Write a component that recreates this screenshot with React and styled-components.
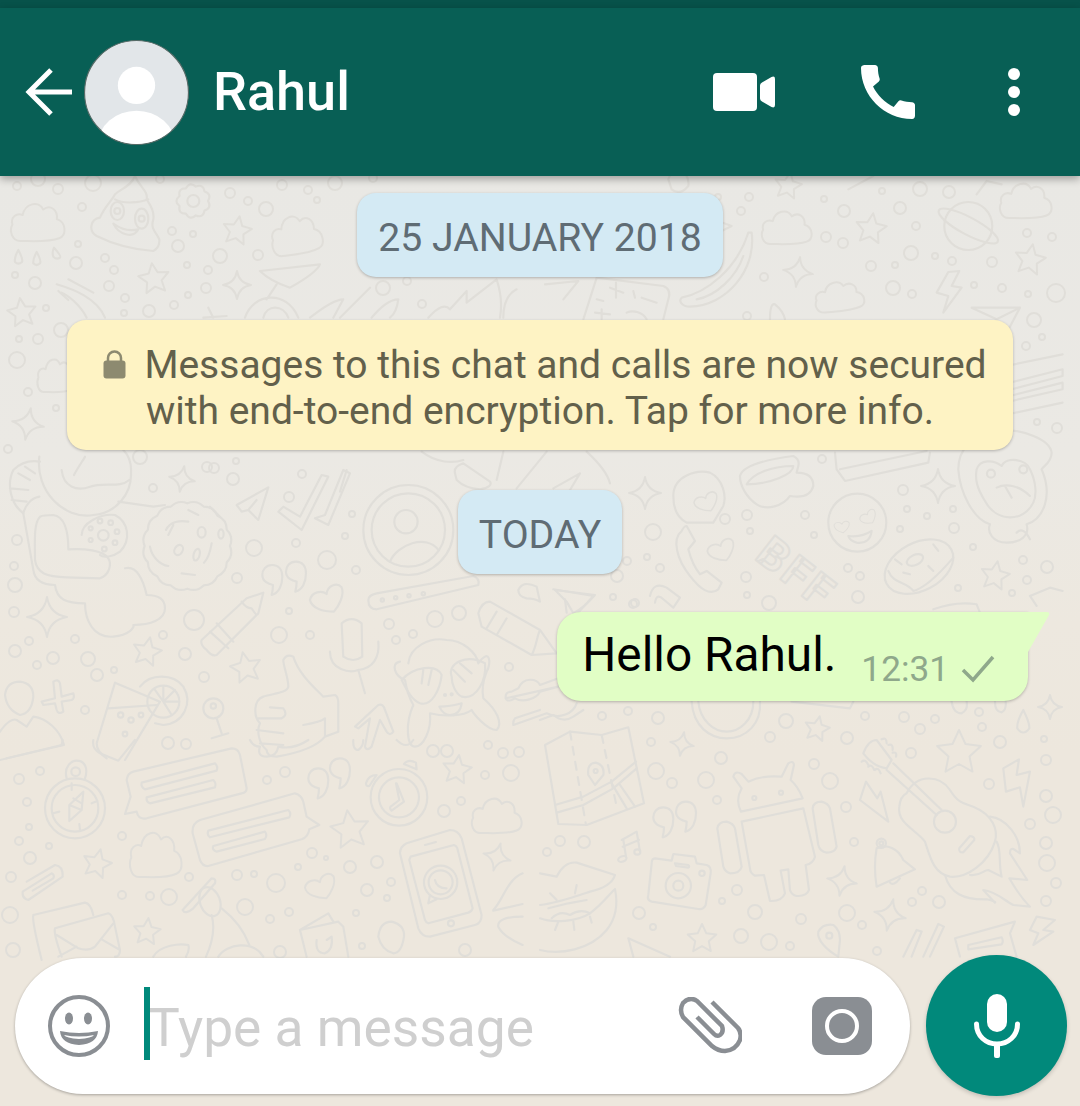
import React from 'react';
import styled, { createGlobalStyle } from 'styled-components';

const GlobalStyle = createGlobalStyle`
html, body {
  margin: 0;
  padding: 0;
  background: #ece7dd;
}
body {
  font-family: Roboto, "Liberation Sans", sans-serif;
}
`;

const Page = styled.div`
width: 1080px;
height: 1106px;
display: flex;
flex-direction: column;
overflow: hidden;
`;

const StatusBar = styled.div`
height: 8px;
flex: none;
background: #07524a;
position: relative;
z-index: 2;
`;

const Header = styled.header`
height: 168px;
flex: none;
display: flex;
align-items: center;
padding: 0 60px 0 25px;
background: #085f55;
box-shadow: 0 3px 8px rgba(0, 0, 0, 0.32);
position: relative;
z-index: 2;
`;

const BackArrow = styled.svg`
width: 48px;
height: 48px;
flex: none;
`;

const Avatar = styled.svg`
width: 105px;
height: 105px;
margin-left: 11px;
flex: none;
`;

const Title = styled.h1`
margin: 0 0 0 24px;
font-size: 54px;
font-weight: 500;
color: #fff;
line-height: 1;
`;

const HeaderActions = styled.div`
margin-left: auto;
display: flex;
align-items: center;
`;

const VideoIcon = styled.svg`
width: 62px;
height: 38px;
`;

const PhoneIcon = styled.svg`
width: 72px;
height: 72px;
margin-left: 77px;
`;

const MenuDots = styled.div`
width: 12px;
margin-left: 84px;
display: flex;
flex-direction: column;
gap: 6px;
`;

const Dot = styled.span`
width: 12px;
height: 12px;
border-radius: 50%;
background: #fff;
`;

const Wall = styled.main`
flex: 1;
position: relative;
isolation: isolate;
display: flex;
flex-direction: column;
align-items: center;
padding-top: 17px;
background: linear-gradient(#e9e8e4 0%, #ebe9e4 30%, #ede8df 48%, #ede7dd 62%, #ede7dd 100%);
`;

const DoodleLayer = styled.svg`
position: absolute;
top: 0;
left: 0;
width: 1080px;
height: 930px;
z-index: -1;
fill: none;
stroke: #e0ded9;
stroke-width: 2;
stroke-linejoin: round;
stroke-linecap: round;
`;

const ThirdScale = styled.g`
stroke-width: 6.5;
`;

const DoodleWord = styled.text`
font-family: Roboto, sans-serif;
font-weight: 700;
font-size: 44px;
letter-spacing: 3px;
`;

const DayPill = styled.div`
height: 84px;
box-sizing: border-box;
padding: 5px 21px 0;
display: flex;
align-items: center;
background: #d4eaf4;
border-radius: 19px;
box-shadow: 0 1px 3px rgba(0, 0, 0, 0.25);
color: #5f6c74;
font-size: 39.2px;
margin-bottom: ${(p) => p.$gap}px;
`;

const Notice = styled.div`
width: 946px;
height: 130px;
box-sizing: border-box;
padding-top: 22px;
background: #fef3c4;
border-radius: 19px;
box-shadow: 0 1px 3px rgba(0, 0, 0, 0.25);
color: #62604b;
font-size: 39px;
line-height: 46px;
text-align: center;
margin-bottom: 40px;
`;

const LockIcon = styled.svg`
width: 23px;
height: 29px;
margin: 0 18px 0 10px;
vertical-align: -1px;
`;

const Outgoing = styled.div`
align-self: flex-end;
margin-right: 52px;
height: 89px;
box-sizing: border-box;
padding: 0 33px 0 25px;
display: flex;
align-items: center;
position: relative;
background: #e1fec5;
border-radius: 24px 0 24px 24px;
box-shadow: 0 1px 3px rgba(0, 0, 0, 0.25);
`;

const BubbleTail = styled.svg`
position: absolute;
top: 0;
left: 100%;
width: 22px;
height: 40px;
`;

const MessageText = styled.span`
font-size: 47.8px;
color: #000;
margin-top: -3px;
`;

const MessageMeta = styled.span`
margin-left: 25px;
margin-top: 24px;
display: flex;
align-items: center;
font-size: 35.2px;
color: #8fa88b;
`;

const TickIcon = styled.svg`
width: 34px;
height: 28px;
margin-left: 12px;
`;

const Composer = styled.div`
margin-top: auto;
align-self: stretch;
padding: 0 13px 10px 15px;
display: flex;
align-items: center;
gap: 16px;
`;

const InputBar = styled.div`
flex: 1;
height: 136px;
box-sizing: border-box;
padding: 0 38px 0 32px;
display: flex;
align-items: center;
background: #fff;
border-radius: 68px;
box-shadow: 0 1px 3px rgba(0, 0, 0, 0.3);
`;

const EmojiIcon = styled.svg`
width: 64px;
height: 64px;
flex: none;
`;

const Placeholder = styled.div`
position: relative;
margin-left: 37px;
padding-top: 6px;
font-size: 53.3px;
color: #cfcfcf;
line-height: 1;
`;

const Caret = styled.span`
position: absolute;
left: -4px;
top: -9px;
width: 6px;
height: 73px;
background: #00897b;
`;

const ClipIcon = styled.svg`
width: 64px;
height: 58px;
margin-left: auto;
flex: none;
`;

const CameraIcon = styled.svg`
width: 60px;
height: 58px;
margin-left: 70px;
flex: none;
`;

const MicButton = styled.div`
width: 141px;
height: 141px;
flex: none;
display: flex;
align-items: center;
justify-content: center;
background: #01897b;
border-radius: 50%;
box-shadow: 0 2px 4px rgba(0, 0, 0, 0.18);
`;

const MicIcon = styled.svg`
width: 46px;
height: 64px;
`;

// wallpaper helpers, all in page coordinates
const star = (cx, cy, r, rot = 0) => {
    const pts = [];
    for (let i = 0; i < 10; i++) {
        const a = ((rot - 90 + i * 36) * Math.PI) / 180;
        const rad = i % 2 ? r * 0.48 : r;
        pts.push(`${(cx + rad * Math.cos(a)).toFixed(1)} ${(cy + rad * Math.sin(a)).toFixed(1)}`);
    }
    return `M${pts.join('L')}Z`;
};

const sparkle = (cx, cy, r, rot = 0) => {
    let d = '';
    for (let i = 0; i < 4; i++) {
        const a = ((rot + i * 90) * Math.PI) / 180;
        const b = ((rot + i * 90 + 45) * Math.PI) / 180;
        const c = ((rot + i * 90 + 90) * Math.PI) / 180;
        const p = (ang, k) => `${(cx + r * k * Math.cos(ang)).toFixed(1)} ${(cy + r * k * Math.sin(ang)).toFixed(1)}`;
        d += `${i ? '' : `M${p(a, 1)}`}Q${p(b, 0.2)} ${p(c, 1)}`;
    }
    return `${d}Z`;
};

const scallop = (cx, cy, r, n, amp) => {
    let d = '';
    for (let i = 0; i < n; i++) {
        const a0 = (i * 2 * Math.PI) / n;
        const a1 = ((i + 0.5) * 2 * Math.PI) / n;
        const a2 = ((i + 1) * 2 * Math.PI) / n;
        d += `${i ? '' : `M${(cx + r * Math.cos(a0)).toFixed(1)} ${(cy + r * Math.sin(a0)).toFixed(1)}`}Q${(cx + (r + amp) * Math.cos(a1)).toFixed(1)} ${(cy + (r + amp) * Math.sin(a1)).toFixed(1)} ${(cx + r * Math.cos(a2)).toFixed(1)} ${(cy + r * Math.sin(a2)).toFixed(1)}`;
    }
    return `${d}Z`;
};

const CLOUD = 'M20 60C5 60 0 45 6 36C2 25 14 18 24 22C28 5 52 0 60 14C72 6 86 14 84 28C100 32 102 52 88 56C70 62 40 60 20 60Z';
const COMMA = 'M30 0C10 0 0 15 0 30C0 50 20 58 32 60C32 72 30 82 28 90C50 85 60 60 60 35C60 15 50 0 30 0Z';
const HEART = 'M0 50C5 25 35 20 50 32C52 8 80 -5 95 12C105 35 85 70 72 85C40 85 5 75 0 50Z';

const clouds = [
    [9, 200, 57, 41, 0], [269, 212, 54, 42, -8], [760, 208, 53, 36, 0], [813, 279, 52, 32, -6],
    [998, 180, 55, 38, 0], [36, 356, 40, 36, 0], [128, 828, 55, 49, 0], [470, 795, 53, 38, 0],
];

const dots = [
    [17,186,4],[38,179,7],[58,189,5],[93,183,8],[82,207,4],[160,179,4],[230,193,5],[248,201,4],[266,209,7],[282,185,5],[308,190,4],[317,200,3],[335,183,7],[373,178,4],
    [172,231,4],[193,234,3],[178,246,6],[220,256,7],[258,255,5],[78,244,3],[105,258,4],[76,263,6],[114,270,4],[187,265,3],[208,270,4],[15,275,3],[35,283,6],[109,286,5],[206,288,5],[188,295,3],[125,298,4],[174,305,4],[149,311,6],[124,313,3],[46,308,3],[61,330,7],[38,339,5],[19,339,3],[17,360,8],[28,392,4],[56,408,3],[8,449,4],[383,288,7],[407,281,4],[422,304,4],[140,457,7],[207,467,5],[236,461,3],
    [749,197,4],[741,211,4],[718,197,3],[824,199,3],[844,211,6],[826,237,5],[843,243,5],[882,191,3],[900,208,6],[920,189,7],[949,192,6],[916,226,4],[911,253,7],[935,256,3],[952,261,4],[895,265,3],[871,266,5],[893,288,7],[912,294,4],[992,262,5],[1027,233,4],[1052,237,4],[974,285,3],[1002,288,4],[1028,294,3],[1056,293,9],[764,277,4],[747,316,4],[1034,320,7],[1042,337,3],[1026,346,4],[1037,422,3],[1057,428,5],[822,459,4],[903,490,5],[907,509,3],[927,516,3],[953,509,3],[954,528,5],[900,529,3],[805,515,4],[747,515,5],[725,519,5],[750,531,3],[653,532,8],[814,535,3],[627,561,4],[647,557,3],[660,568,4],[617,576,6],[613,597,3],[633,604,4],[746,577,5],[747,595,3],[769,603,7],[858,597,6],[860,576,4],[848,568,4],[973,547,3],[1023,560,4],[1047,567,6],[1027,580,4],[1012,593,3],[958,588,3],
    [17,540,5],[14,566,4],[15,585,7],[14,612,5],[29,641,4],[15,651,6],[53,658,6],[37,665,4],[75,639,4],[88,659,7],[97,675,6],[114,670,3],[85,710,4],[153,488,4],[214,468,5],[233,479,6],[302,474,4],[289,497,5],[352,514,3],[345,536,3],[296,543,4],[254,548,8],[327,560,9],[356,570,4],[237,578,5],[289,611,3],[194,620,10],[279,635,8],[310,635,4],[389,624,5],[396,640,4],[163,635,4],[185,654,6],[204,677,5],[168,743,6],[186,744,5],
    [19,779,5],[40,771,4],[27,802,4],[29,827,3],[19,841,4],[49,846,3],[30,858,6],[11,877,5],[10,915,8],[13,950,7],[122,836,4],[122,895,4],[150,896,4],[169,897,8],[189,877,4],[237,875,5],[254,874,3],[276,883,9],[245,907,8],[270,919,4],[289,912,4],[280,952,6],[267,780,4],[285,772,5],[433,751,6],[488,745,4],[503,753,5],[485,775,4],[511,773,8],[444,811,6],[461,801,4],[312,853,5],[326,858,2],[298,867,3],[350,867,6],[377,862,6],[367,890,6],[391,882,4],[387,898,3],[356,913,3],[362,946,3],[465,950,6],
    [602,716,4],[628,711,4],[658,718,6],[651,742,4],[656,771,8],[672,783,5],[706,780,8],[721,758,6],[717,800,4],[770,737,5],[786,721,7],[847,738,6],[865,716,4],[904,717,5],[920,729,5],[935,719,4],[979,712,4],[982,727,4],[911,753,5],[814,764,5],[830,781,8],[846,807,5],[854,842,4],[1000,742,6],[1044,739,3],[1046,760,5],[989,784,5],[1046,796,6],[1053,815,8],[1030,824,5],[1046,843,6],[1047,863,8],[1056,883,5],[1046,901,5],[922,891,4],[912,902,4],[939,902,6],[847,913,8],[862,925,4],[877,951,4],[560,841,5],[584,842,6],[547,852,4],[737,890,5],[722,901,3],[755,912,7],[639,913,6],[653,927,3],[801,919,5],[741,936,7],[769,942,8],[790,946,4],
    [435,619,8],[459,613,7],[413,634,4],[509,667,4],[447,751,6],[519,752,5],[635,603,4],
];

const stars = [
    [237,231,15,10],[154,279,16,-8],[22,313,15,-8],[871,229,16,8],[1030,260,16,10],[995,576,15,10],[788,186,14,10],
    [147,652,15,12],[246,668,16,-12],[457,770,15,8],[350,830,20,-8],[97,864,15,14],[147,932,14,6],[817,729,13,12],[959,753,23,0],[702,939,15,0],
];

const sparkles = [
    [237,285,14,0],[28,424,16,10],[798,272,15,8],[645,493,16,0],[938,486,17,0],[182,479,13,10],[47,617,20,0],[497,857,14,15],[682,744,12,10],[842,881,15,10],[890,915,16,12],[1050,707,12,0],
];

const Doodles = () => (
    <DoodleLayer viewBox="0 176 1080 930" aria-hidden="true">
        {dots.map(([x, y, r], i) => <circle key={`d${i}`} cx={x} cy={y} r={r} />)}
        {stars.map(([x, y, r, a], i) => <path key={`s${i}`} d={star(x, y, r, a)} />)}
        {sparkles.map(([x, y, r, a], i) => <path key={`k${i}`} d={sparkle(x, y, r, a)} />)}
        {clouds.map(([x, y, w, h, a], i) => (
            <path key={`c${i}`} d={CLOUD} vectorEffect="non-scaling-stroke"
                transform={`rotate(${a} ${x + w / 2} ${y + h / 2}) translate(${x} ${y}) scale(${w / 100} ${h / 60})`} />
        ))}
        <DoodleWord x="797" y="588" textAnchor="middle" transform="rotate(38 797 572)">BFF</DoodleWord>

        {/* top left */}
        <g transform="translate(0 176) scale(0.3333)">
            <ThirdScale>
                <path d="M300 125C270 130 265 165 290 180C330 200 390 220 460 225Q480 215 478 190C470 170 450 160 460 130C465 100 445 80 440 70C445 45 420 35 405 0C395 30 360 40 345 55C335 75 315 90 300 125Z" />
                <ellipse cx="352" cy="105" rx="20" ry="27" /><circle cx="352" cy="105" r="9" />
                <ellipse cx="425" cy="128" rx="20" ry="30" /><circle cx="425" cy="128" r="9" />
                <path d="M340 143C370 165 395 165 415 160C400 190 355 175 340 143ZM345 70C370 85 420 80 445 70" />
                <path d="M55 222Q70 250 66 258Q55 268 45 258Q42 245 55 222ZM110 228Q125 255 120 262Q110 272 100 262Q98 250 110 228ZM162 215Q185 240 180 245Q170 252 160 242Q155 230 162 215Z" />
                <path d={scallop(580, 75, 44, 9, 16)} /><circle cx="580" cy="75" r="18" />
                <path d="M170 325C220 340 290 365 315 425M185 350C200 355 240 385 260 425M205 310L280 350M175 345L205 372" />
                <path d="M780 285L960 265Q950 290 870 335Q810 315 780 285ZM800 370L830 325M735 425C760 350 860 340 895 425M790 425C800 385 850 385 865 425" />
                <path d="M930 425Q1000 370 1030 370L1000 425M1020 425L1110 335M1115 425C1140 395 1170 370 1195 370Q1190 410 1170 425M1285 425Q1330 375 1350 400L1400 345L1400 380L1490 310Q1510 370 1500 425M1510 425Q1510 360 1550 340" />
                <path d="M625 395L640 425M610 425L680 420" />
            </ThirdScale>
        </g>

        {/* top right */}
        <g transform="translate(540 176) scale(0.3333)">
            <ThirdScale>
                <circle cx="1285" cy="150" r="72" />
                <ellipse cx="1285" cy="150" rx="100" ry="26" transform="rotate(28 1285 150)" />
                <path d="M425 365C500 350 590 280 625 170L635 170C650 280 560 390 450 392C425 392 415 375 425 365ZM470 370C530 360 590 300 610 240" />
                <path d="M1225 288L1190 350L1225 360L1210 410L1265 335L1235 330L1258 285Z" />
                <path d="M1295 395L1440 395L1390 490L1370 430ZM1370 430L1440 395" />
                <path d="M15 325L115 315L70 370M130 430L170 305L370 330Q395 340 385 370L370 430M210 335L250 350M228 320L228 365M170 370L190 375M280 345L285 365M305 365L350 380M165 410L210 415M185 400L185 430M260 410C280 400 310 410 320 430" />
                <path d="M520 130L575 150L535 170L540 200" />
                <path d="M690 430Q690 380 705 385Q730 405 735 430" />
                <path d="M925 40L1000 0M1310 55L1340 15M1340 15L1385 25" />
                <path d="M385 10Q395 -20 420 -20Q450 0 445 30Q420 60 395 40Z" />
                {/* lower band */}
                <path d="M600 900Q610 860 760 840Q780 850 775 870L770 890Q820 890 820 930Q810 970 750 960C730 990 680 1005 650 985C620 965 600 930 600 900ZM620 925C640 890 700 870 760 870C760 895 690 925 620 925Z" />
                <path d="M885 830L890 880L915 915L1165 860L1170 830M900 880L1160 825" />
                <path d="M400 960C400 900 470 880 510 890C550 910 560 960 550 990L520 1040L440 1040Q400 1020 400 960Z" />
                <path d={HEART} transform="translate(462 945) scale(0.7)" />
                <circle cx="952" cy="1040" r="87" />
                <path d={HEART} transform="translate(888 1025) rotate(15) scale(0.45)" />
                <path d={HEART} transform="translate(955 1005) rotate(-10) scale(0.5)" />
                <path d="M925 1080Q965 1085 995 1065Q990 1105 950 1100Q930 1095 925 1080Z" />
                <ellipse cx="1137" cy="1172" rx="110" ry="72" transform="rotate(-28 1137 1172)" />
                <ellipse cx="1125" cy="1152" rx="26" ry="15" transform="rotate(-25 1125 1152)" />
                <path d="M1045 1185C1060 1225 1100 1215 1120 1245C1160 1235 1210 1180 1240 1145M1065 1150L1085 1165M1180 1105L1195 1125M1090 1190L1110 1195M1165 1170L1180 1185" />
                <path d="M1255 880C1255 820 1300 770 1370 760C1450 760 1530 790 1535 830C1535 860 1510 870 1505 880C1540 960 1510 1030 1460 1045C1470 1080 1440 1100 1400 1100C1360 1100 1340 1070 1350 1045C1300 1030 1260 950 1255 880Z" />
                <path d="M1310 880C1320 850 1360 850 1385 870C1400 840 1460 850 1470 880C1490 920 1490 960 1480 980C1450 1040 1370 1040 1335 975C1310 935 1305 910 1310 880ZM1370 935C1400 920 1440 930 1470 960M1395 930L1415 965" />
                <circle cx="1353" cy="893" r="12" /><circle cx="1450" cy="880" r="12" />
                <path d="M425 1065C395 1090 410 1150 450 1200C480 1240 510 1260 535 1240L545 1220L500 1185L480 1195C460 1170 450 1140 445 1120L465 1095L440 1050Q432 1050 425 1065Z" />
                <path d={HEART} transform="translate(502 1085) scale(0.8)" />
                <path d="M40 1240L160 1260L115 1310M75 1270L80 1310M330 1260Q340 1215 380 1235L420 1265L400 1295L370 1270Q350 1250 345 1280M1470 1260L1530 1235L1568 1245M1470 1260L1490 1290M1180 1300Q1250 1275 1310 1285L1320 1310" />
                <path d="M1375 575L1568 535M1390 625L1568 580L1568 600L1395 645ZM1410 660L1568 620L1568 640L1415 675ZM1380 720L1568 680" />
                <path d="M1430 1070Q1450 1050 1470 1090" />
            </ThirdScale>
        </g>

        {/* middle left */}
        <g transform="translate(0 460) scale(0.3333)">
            <ThirdScale>
                <path d="M118 110C90 115 75 140 70 160L100 330C105 370 140 375 165 375C170 420 200 430 255 430C255 480 280 535 340 530C390 525 405 500 400 495C450 495 495 480 495 445C495 415 470 405 440 405C430 360 410 315 375 325" />
                <path d="M120 170C100 190 105 250 105 300C110 340 140 350 200 352L300 355C330 345 335 310 325 295C310 270 250 265 205 268C205 220 195 170 160 165C145 165 130 165 120 170Z" />
                <path d="M70 160C30 130 20 70 40 30C60 10 90 0 120 5M55 40L90 60M30 85L85 90M35 120L80 125M75 20L105 40" />
                <path d="M118 -10C105 90 190 180 280 165C350 160 395 100 393 40C395 10 385 -15 370 -30" />
                <path d="M185 30C190 80 230 95 270 80C310 65 360 85 388 60M222 45C235 20 250 0 255 -10" />
                <path d="M245 225C245 190 300 160 345 165C385 185 395 240 360 275C340 290 310 295 300 285" />
                <circle cx="310" cy="226" r="16" /><circle cx="300" cy="183" r="7" /><circle cx="332" cy="188" r="7" /><circle cx="351" cy="215" r="7" /><circle cx="345" cy="248" r="7" /><circle cx="272" cy="205" r="6" /><circle cx="272" cy="240" r="6" /><circle cx="313" cy="267" r="7" />
                <path d="M355 125L460 140L495 135" />
                <path d={scallop(562, 258, 128, 16, 14)} />
                <path d="M498 210C510 185 540 180 565 185M505 225L520 195M450 260C455 290 480 315 505 318M635 250C630 280 625 295 612 308M545 340L585 345M565 150L595 165M630 140L660 170" />
                <ellipse cx="605" cy="217" rx="12" ry="16" /><ellipse cx="663" cy="222" rx="8" ry="14" /><ellipse cx="536" cy="270" rx="12" ry="16" transform="rotate(30 536 270)" /><ellipse cx="590" cy="284" rx="9" ry="18" transform="rotate(15 590 284)" />
                <path d="M710 135L805 82L775 180L745 150L725 155ZM745 150L770 120" />
                <path d="M835 155L905 210L985 50L965 45L900 170L850 140ZM945 175L985 195L1050 40L1030 30L975 165Z" />
                <path d={COMMA} transform="translate(787 315)" />
                <path d={COMMA} transform="translate(858 305)" />
                <path d={HEART} transform="translate(930 370)" />
                <path d="M605 540L740 415L790 398L775 460L650 585Q635 590 620 570Q600 555 605 540ZM630 515L685 565M650 490L700 545M725 425C735 440 745 445 755 445C765 460 770 470 775 460" />
                <path d="M1025 490Q1055 465 1085 490L1087 590Q1060 610 1030 590ZM990 575C990 630 1050 640 1075 630C1120 625 1140 590 1135 545M1075 630L1095 700" />
                <path d="M850 600Q860 580 880 590C895 640 940 680 970 710L1005 705Q1015 710 1015 730L1015 815L975 830C950 860 890 880 830 890Q800 890 800 870C775 850 770 810 780 790C760 770 760 720 790 710C820 700 860 700 865 680C865 650 850 620 850 600ZM810 742L850 745Q865 765 845 775L775 775M770 810L850 820M780 850L850 855M910 795C940 790 965 785 975 775L975 830" />
                <path d="M345 668L480 725L375 900M345 668L290 850Q290 875 320 895M325 745L470 735" />
                <path d="M420 680C450 640 520 640 550 680C580 730 550 790 490 795L465 790" />
                <circle cx="490" cy="725" r="48" />
                <path d="M490 725L535 725M490 725L525 690M490 725L490 680M490 725L515 765M490 725L465 690" />
                <circle cx="362" cy="765" r="8" /><circle cx="393" cy="780" r="8" /><circle cx="423" cy="765" r="7" /><circle cx="375" cy="822" r="7" />
                <path d="M15 705Q20 665 60 665Q100 670 100 710Q95 760 60 765Q20 750 15 705ZM0 815C20 785 40 775 50 780L80 800L100 770C140 775 180 810 192 855L20 895" />
                <path d="M125 725L165 715L160 665Q175 655 180 670L185 710L220 700Q225 715 215 720L185 725L190 755Q175 765 170 750L165 730L130 735Z" />
                <circle cx="640" cy="745" r="30" /><circle cx="640" cy="738" r="8" />
                <path d="M650 775L665 820M635 835L685 820" />
                <path d="M1065 800L1135 735Q1150 730 1155 750L1180 815Q1170 830 1160 815L1140 780L1115 860Q1100 875 1095 860L1110 775L1075 805Z" />
            </ThirdScale>
        </g>

        {/* centre */}
        <g transform="translate(340 450) scale(0.3333)">
            <ThirdScale>
                <circle cx="205" cy="240" r="135" /><circle cx="205" cy="240" r="110" /><circle cx="198" cy="215" r="35" />
                <path d="M150 335C170 285 260 250 295 300" />
                <path d="M85 450Q85 435 110 430L400 378Q420 385 415 405L110 478Q85 478 85 450Z" />
                <circle cx="127" cy="450" r="5" /><circle cx="167" cy="443" r="5" /><circle cx="207" cy="437" r="5" /><circle cx="250" cy="431" r="5" />
                <path d="M415 490Q425 455 450 455L600 540L650 610L575 615L425 530ZM470 485L440 535M500 505L470 555M600 540C590 560 590 590 575 615" />
                <path d="M535 420Q550 390 590 410L600 455Q585 445 560 445Q535 440 535 420Z" />
                <path d="M645 420L765 435Q730 475 700 490L680 455Z" />
                <path d="M345 70Q340 50 370 40L450 95Q460 110 420 118Q375 115 350 90ZM490 5L470 90M245 5C290 40 340 40 370 30M530 115L620 5M640 115L720 70M720 70L690 120M810 100Q800 60 740 5" />
                <path d="M20 60L0 125" />
                <path d="M205 640C210 590 270 560 320 570C370 570 410 610 415 640C450 590 455 640 440 665C430 690 425 720 430 745C470 780 490 820 470 840C440 840 400 790 395 780C370 800 310 800 270 790C275 840 250 890 225 890C200 890 195 820 220 765C205 740 200 720 195 690C165 680 150 640 180 635" />
                <path d="M185 690C220 650 290 640 305 675C300 720 275 770 240 760C215 750 200 720 185 690ZM335 680C320 640 380 610 435 640C440 690 410 750 365 740C345 730 335 700 335 680ZM250 660L245 700M275 660L265 705M340 660L375 695M360 640L395 670" />
                <path d="M298 770Q330 770 365 760Q360 795 330 795Q310 795 298 770Z" />
                <circle cx="315" cy="735" r="3" /><circle cx="335" cy="733" r="3" />
                <path d="M497 745Q495 725 515 725L535 715C550 680 590 685 600 705L655 685M655 710L600 725C590 745 550 760 525 745L515 750Q500 755 497 745ZM520 825L620 790C660 810 700 790 710 760M520 825Q518 815 525 805L600 780" />
            </ThirdScale>
        </g>

        {/* bottom left */}
        <g transform="translate(0 740) scale(0.3333)">
            <ThirdScale>
                <circle cx="225" cy="205" r="90" /><circle cx="225" cy="205" r="70" /><circle cx="227" cy="95" r="13" />
                <path d="M200 115C190 80 215 62 230 62C255 62 265 85 255 115" />
                <path d="M250 155L245 210L208 243L208 195ZM208 195L245 210M220 175L245 190M215 130L215 150M160 220L178 215M238 252L240 270M275 190L292 183" />
                <path d="M400 95L695 25Q715 25 720 45L740 145Q740 158 725 160L440 235Q415 240 410 215L375 222L392 170L380 120Q382 100 400 95Z" />
                <path d="M425 128L645 70Q655 80 650 92L435 148Q422 140 425 128ZM440 172L640 120Q650 130 645 142L450 190Q438 185 440 172Z" />
                <path d="M600 240L885 160Q905 165 910 185L920 230L958 255L928 268Q925 290 905 298L625 378Q608 380 600 360L578 280Q575 250 600 240Z" />
                <path d="M625 272L865 210Q875 220 868 232L630 292Q620 285 625 272ZM640 318L795 275Q803 285 795 297L650 335Q635 330 640 318Z" />
                <path d="M80 425L165 375Q190 378 188 410L85 480Q65 475 68 455L155 400Q165 405 160 415L98 452" />
                <path d="M100 525L255 488Q272 490 280 525M100 525Q95 540 125 660M165 565L325 520Q340 525 345 560L360 630Q360 650 345 650M165 565Q160 580 185 650M170 585L235 625Q265 635 285 620L340 550M305 598L360 630M175 650L230 620" />
                <path d="M548 510L635 415Q650 415 645 430L580 505Q555 525 548 510Z" />
                <ellipse cx="630" cy="485" rx="30" ry="45" transform="rotate(-20 630 485)" />
                <path d="M635 525Q650 580 618 650M665 505C710 540 735 580 748 615M655 650C680 610 760 600 790 650M460 650C480 615 540 610 565 615Q570 630 558 650" />
                <path d={HEART} transform="translate(915 398) scale(0.9)" />
                <path d="M1220 310L1350 270Q1375 270 1385 295L1445 525Q1445 550 1425 555L1290 590Q1265 590 1255 565L1200 340Q1200 320 1220 310Z" />
                <path d="M1232 350L1362 315Q1370 318 1372 325L1418 505Q1415 515 1405 518L1285 550Q1278 548 1275 540L1228 360Z" />
                <path d="M1275 315L1308 306" />
                <circle cx="1353" cy="550" r="9" /><circle cx="1322" cy="427" r="50" /><circle cx="1322" cy="427" r="36" />
                <path d="M1305 420Q1310 445 1340 445M1285 490L1290 465M1285 490L1310 478" />
                <circle cx="1197" cy="172" r="85" /><circle cx="1197" cy="172" r="60" />
                <path d="M1190 130L1212 185L1175 212Q1168 205 1172 200L1198 180L1188 130ZM1098 130Q1105 105 1130 105L1108 138Q1098 140 1098 130ZM1212 72Q1225 55 1248 68L1250 88Z" />
                <path d="M1135 590Q1140 545 1175 545Q1215 555 1212 590Q1205 640 1180 640Q1145 630 1135 590Z" />
                <path d="M900 570L985 520L1000 545M900 570L1015 545L1030 560L1045 650M900 570L920 650M950 600Q945 640 975 640Q1000 630 995 590L980 600" />
                <path d="M1480 510C1510 480 1520 420 1568 400M1480 512L1568 492M1568 530Q1490 530 1495 560Q1510 590 1568 615" />
                <path d={COMMA} transform="translate(925 85)" />
                <path d={COMMA} transform="translate(990 55)" />
                <path d="M280 0Q275 25 300 40L355 62L405 0M750 0Q760 20 780 20Q770 50 800 50Q830 50 835 20Q880 30 925 0M1060 0Q1058 30 1075 30Q1090 20 1090 0M1190 0Q1220 30 1240 0M0 60L185 15L188 0" />
            </ThirdScale>
        </g>

        {/* bottom right */}
        <g transform="translate(540 700) scale(0.3333)">
            <ThirdScale>
                <path d="M15 135L90 95L185 105L265 82L312 310L140 375L55 372Z" />
                <path d="M90 95L138 375M185 105L230 320" strokeDasharray="24 22" />
                <path d="M45 315L130 290L215 245L288 185M50 338L130 315L220 265L290 205M240 255L285 320M215 250L260 325" />
                <path d="M165 255L145 225Q140 190 167 188Q195 195 190 225Z" /><circle cx="167" cy="213" r="6" />
                <path d={COMMA} transform="translate(340 322)" />
                <path d={COMMA} transform="translate(408 305)" />
                <path d="M245 420L290 395L300 455M250 420L258 470M248 440L297 420" />
                <ellipse cx="247" cy="477" rx="13" ry="8" transform="rotate(-20 247 477)" /><ellipse cx="292" cy="456" rx="9" ry="8" />
                <path d="M0 520L50 530C65 500 85 485 110 488L225 525Q215 560 150 575C120 585 50 610 0 615M0 655C40 670 110 665 150 640C190 610 210 580 225 567Q240 640 200 690C150 750 60 765 0 750" />
                <path d="M25 625L85 610L140 600M30 580L50 600M110 555L105 580M35 655Q60 630 90 645Q120 625 150 640M150 650L155 668M100 665L103 690M55 665L45 690" />
                <path d="M345 475L395 482L400 462L465 470L470 490L500 495Q515 500 512 520L497 615Q490 630 475 627L335 605Q320 600 325 585L335 490Q335 475 345 475Z" />
                <circle cx="415" cy="557" r="38" /><circle cx="415" cy="557" r="15" /><circle cx="486" cy="520" r="8" />
                <path d="M405 490L445 495Q450 500 445 503L408 498Z" />
                <path d="M603 335Q585 300 605 265L580 230Q585 210 605 222L625 245Q665 225 725 230L745 190Q760 180 762 195L752 240Q775 260 788 295Z" />
                <circle cx="643" cy="294" r="6" /><circle cx="723" cy="278" r="6" />
                <path d="M605 365L790 325L825 470Q820 490 797 495L807 570Q800 590 770 588Q755 585 750 570L745 508L722 512L735 580Q725 605 690 603L672 525L645 527Q630 520 630 505Z" />
                <path d="M532 385Q535 365 560 365Q580 370 585 385L605 500Q600 520 570 520Q555 515 550 500Z" />
                <path d="M818 325Q820 305 845 305Q865 310 870 325L890 440Q885 458 860 458Q840 455 835 435Z" />
                <path d="M1040 210L1190 345M1060 190L1205 330M970 160Q985 120 1010 120L1055 180L1040 205Q1000 200 970 160Z" />
                <path d="M1025 118Q1040 110 1040 130M1045 135Q1060 130 1058 150M1058 158Q1072 155 1068 170M965 185Q975 175 985 195M985 200Q995 190 1003 210M1005 210Q1015 200 1022 220" />
                <path d="M1100 280C1130 220 1200 225 1230 270C1255 310 1270 310 1300 320C1360 345 1375 390 1365 425C1345 490 1280 535 1230 530C1180 520 1170 470 1155 425C1130 390 1070 370 1078 320C1080 300 1090 285 1100 280Z" />
                <circle cx="1215" cy="365" r="33" />
                <path d="M1258 445L1290 408Q1305 410 1303 420L1270 457Q1255 458 1258 445Z" />
                <path d="M1215 525C1230 580 1270 600 1340 598Q1370 605 1365 608L1330 570C1370 575 1390 600 1420 615L1470 620Q1440 590 1408 535L1462 540L1410 460Q1410 440 1425 450L1440 460C1440 410 1400 355 1350 350" />
                <path d="M1290 525C1320 530 1330 510 1345 510L1385 530C1375 490 1385 450 1370 425" />
                <path d="M978 245L960 300L1045 365L1022 275L1012 295ZM1390 205L1437 178L1430 225L1470 215L1450 320L1440 262L1398 275ZM1490 650L1545 660L1510 690L1540 695L1480 735L1495 700L1470 690Z" />
                <circle cx="1024" cy="430" r="14" /><circle cx="1024" cy="430" r="6" />
                <path d="M1010 445C1040 430 1075 445 1090 480L1125 508L1010 560Q1000 500 1010 445ZM1050 548Q1060 560 1080 535" />
                <path d="M895 770C860 750 830 720 835 695Q850 670 880 675Q900 690 900 720Z" /><circle cx="868" cy="707" r="9" />
                <path d="M1245 715L1425 665L1410 700L1430 770M1245 715L1260 770M1285 735L1385 712Q1392 725 1385 733L1285 748Z" />
                <path d="M1090 770L1130 690L1145 695L1115 770M1150 770L1195 672L1212 680L1170 770M265 715L390 770M265 715L280 770" />
                <path d="M1450 30Q1470 70 1468 85Q1450 110 1432 85Q1430 65 1450 30Z" />
                <path d="M455 5C460 80 510 115 560 115C620 115 665 70 660 5M475 5C480 60 520 95 560 95C600 95 640 60 640 5" />
                <path d="M1235 5Q1240 40 1265 40Q1285 30 1280 5M1365 5Q1365 35 1385 37Q1400 30 1397 5M0 60L40 45Q70 70 100 50L130 30M755 5L930 25L940 5" />
            </ThirdScale>
        </g>
    </DoodleLayer>
);

const App = () => (
    <Page>
        <GlobalStyle />
        <StatusBar />
        <Header>
            <BackArrow viewBox="0 0 48 48" fill="none" stroke="#fff" strokeWidth="5">
                <path d="M47 24H4M26 2L4 24L26 46" />
            </BackArrow>
            <Avatar viewBox="0 0 104 104">
                <defs>
                    <clipPath id="avatarClip"><circle cx="52" cy="52" r="51" /></clipPath>
                </defs>
                <circle cx="52" cy="52" r="51.500" fill="#e2e6e9" stroke="#566b67" strokeWidth="1.200" />
                <circle cx="52" cy="45" r="18.500" fill="#fff" />
                <ellipse cx="52" cy="103" rx="38" ry="33" fill="#fff" clipPath="url(#avatarClip)" />
            </Avatar>
            <Title>Rahul</Title>
            <HeaderActions>
                <VideoIcon viewBox="0 0 62 38" fill="#fff">
                    <rect x="0" y="0" width="44" height="38" rx="4" />
                    <path d="M47 12.500Q47 10.500 49 9.500L58.500 4Q62 2.500 62 6V32Q62 35.500 58.500 34L49 28.500Q47 27.500 47 25.500Z" />
                </VideoIcon>
                <PhoneIcon viewBox="0 0 24 24" fill="#fff">
                    <path d="M20.01 15.38c-1.23 0-2.42-.2-3.53-.56a.977.977 0 0 0-1.01.24l-1.57 1.97c-2.83-1.35-5.48-3.9-6.89-6.83l1.95-1.66c.27-.28.35-.67.24-1.02-.37-1.11-.56-2.3-.56-3.53 0-.54-.45-.99-.99-.99H4.19C3.65 3 3 3.24 3 3.99 3 13.28 10.73 21 20.01 21c.71 0 .99-.63.99-1.18v-3.45c0-.54-.45-.99-.99-.99z" />
                </PhoneIcon>
                <MenuDots>
                    <Dot />
                    <Dot />
                    <Dot />
                </MenuDots>
            </HeaderActions>
        </Header>
        <Wall>
            <Doodles />
            <DayPill $gap={43}>25 JANUARY 2018</DayPill>
            <Notice>
                <LockIcon viewBox="0 0 23 29">
                    <path d="M5 12V8a6.500 6.500 0 0 1 13 0v4" fill="none" stroke="#8d8a70" strokeWidth="2.500" />
                    <rect x="0.500" y="10.500" width="22" height="18" rx="3" fill="#8d8a70" />
                </LockIcon>
                Messages to this chat and calls are now secured
                <br />
                with end-to-end encryption. Tap for more info.
            </Notice>
            <DayPill $gap={38}>TODAY</DayPill>
            <Outgoing>
                <MessageText>Hello Rahul.</MessageText>
                <MessageMeta>
                    12:31
                    <TickIcon viewBox="0 0 34 28" fill="none" stroke="#8fa88b" strokeWidth="3.500">
                        <path d="M2 15L12 25L32 2" />
                    </TickIcon>
                </MessageMeta>
                <BubbleTail viewBox="0 0 22 40">
                    <path d="M0 0H19Q22 0 21 3L0 40Z" fill="#e1fec5" />
                </BubbleTail>
            </Outgoing>
            <Composer>
                <InputBar>
                    <EmojiIcon viewBox="0 0 64 64">
                        <circle cx="32" cy="32" r="29" fill="none" stroke="#8a8e93" strokeWidth="4" />
                        <ellipse cx="22" cy="24.500" rx="4" ry="6" fill="#8a8e93" />
                        <ellipse cx="41" cy="24.500" rx="4" ry="6" fill="#8a8e93" />
                        <path d="M13 37Q32 41 51 37Q50 50 32 51Q14 50 13 37Z" fill="#8a8e93" />
                        <path d="M17 41Q32 44 47 41Q45 44 32 45Q19 44 17 41Z" fill="#fff" />
                    </EmojiIcon>
                    <Placeholder>
                        <Caret />
                        Type a message
                    </Placeholder>
                    <ClipIcon viewBox="0 0 64 58" fill="none" stroke="#8a8e93" strokeWidth="4.500">
                        <path d="M34 5L60 31Q64 36 62 43Q58 53 47 54Q40 54 34 49L5 20Q1 13 5 6Q12 -1 19 4L44 29Q46 35 42 38Q39 40 36 37L19 20" />
                    </ClipIcon>
                    <CameraIcon viewBox="0 0 60 58">
                        <rect x="0" y="0" width="60" height="58" rx="14" fill="#8a8e93" />
                        <circle cx="30" cy="29" r="15" fill="none" stroke="#fff" strokeWidth="4" />
                    </CameraIcon>
                </InputBar>
                <MicButton>
                    <MicIcon viewBox="0 0 46 64" fill="#fff">
                        <rect x="13" y="0" width="20" height="38" rx="10" />
                        <path d="M2.500 30C2.500 42 12 50 23 50C34 50 43.500 42 43.500 30" fill="none" stroke="#fff" strokeWidth="5" strokeLinecap="round" />
                        <rect x="20" y="48" width="6" height="16" rx="2" />
                    </MicIcon>
                </MicButton>
            </Composer>
        </Wall>
    </Page>
);

export default App;
